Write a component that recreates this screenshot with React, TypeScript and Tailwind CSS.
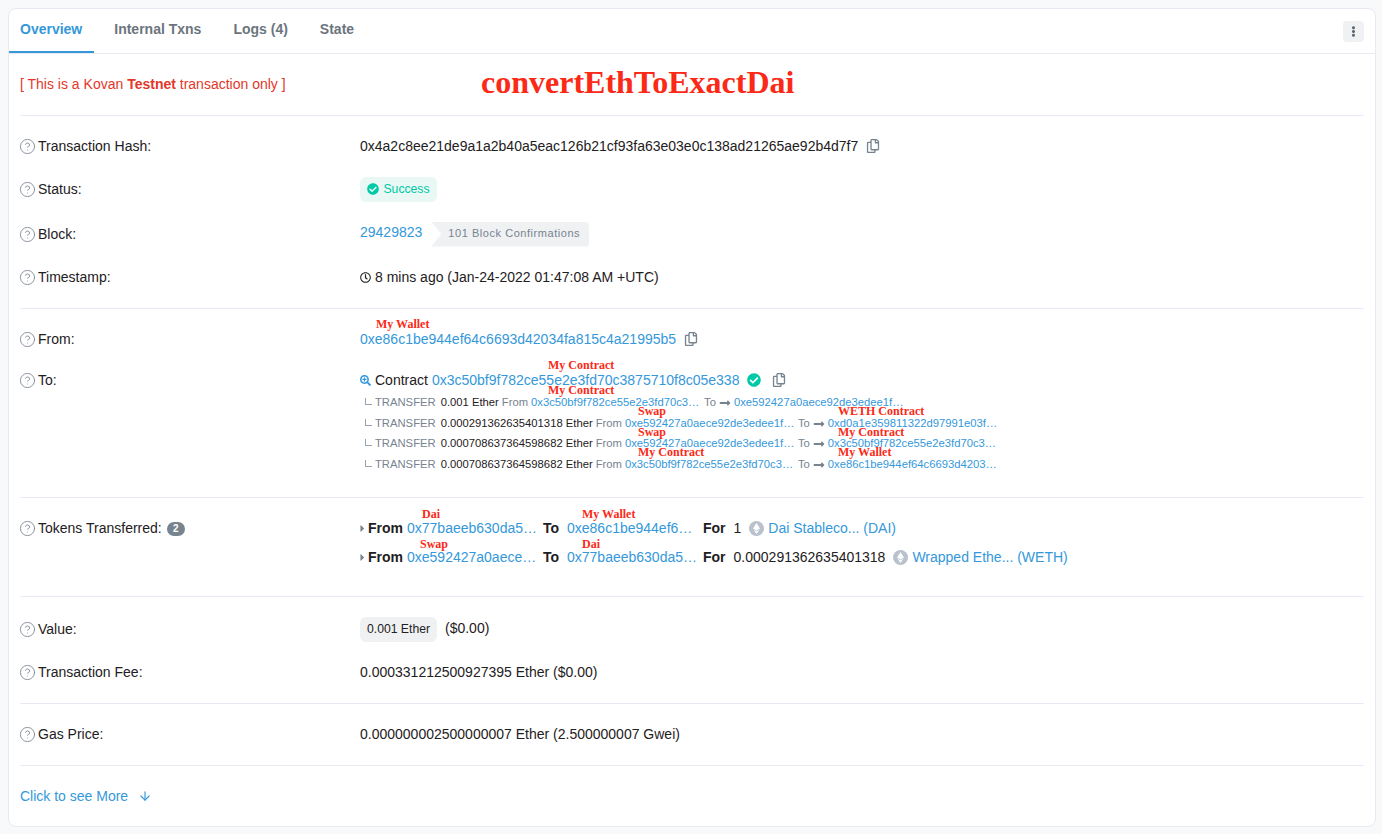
import type { ReactNode } from 'react';
import { CircleHelp, ArrowDown } from 'lucide-react';
import {
  FaRegCopy,
  FaCheckCircle,
  FaRegClock,
  FaSearchPlus,
  FaLongArrowAltRight,
  FaEllipsisV,
  FaCaretRight,
} from 'react-icons/fa';

function Note({ className, children }: { className: string; children: ReactNode }) {
  return (
    <span className={`absolute whitespace-nowrap font-['Liberation_Serif',serif] text-[12px] leading-none font-bold text-[#fb2a17] ${className}`}>
      {children}
    </span>
  );
}

function Row({ label, className, children }: { label?: ReactNode; className: string; children: ReactNode }) {
  return (
    <div className={`flex items-center ${className}`}>
      <div className="flex w-[340px] shrink-0 items-center gap-[2px] text-[#1e2022]">
        {label && <CircleHelp size={17} strokeWidth={1.2} className="-ml-[1px] text-[#77838f]" />}
        {label}
      </div>
      <div className="relative flex items-center">{children}</div>
    </div>
  );
}

function Divider() {
  return <div className="mx-[11px] h-px bg-[#e7eaf3]" />;
}

function Copy({ className = '' }: { className?: string }) {
  return <FaRegCopy size={14} className={`text-[#77838f] ${className}`} />;
}

function Transfer({
  amount,
  from,
  to,
  className,
  children,
}: {
  amount: string;
  from: string;
  to: string;
  className: string;
  children?: ReactNode;
}) {
  return (
    <div className={`relative flex items-center text-[11.25px] whitespace-nowrap ${className}`}>
      <span className="mr-[3px] ml-[5px] h-[7px] w-[7px] -translate-y-[1px] border-b border-l border-[#97a4af]" />
      <span className="mr-[5px] text-[#77838f]">TRANSFER</span>
      <span className="text-[#1e2022]">{amount}</span>
      <span className="mr-[3px] ml-[3px] text-[#77838f]">From</span>
      <a className="w-[168px] text-[#3498db]">{from}</a>
      <span className="ml-[5px] text-[#77838f]">To</span>
      <FaLongArrowAltRight size={12} className="mx-[3px] text-[#77838f]" />
      <a className="text-[#3498db]">{to}</a>
      {children}
    </div>
  );
}

function TokenIcon() {
  return (
    <span className="flex h-[15px] w-[15px] items-center justify-center rounded-full bg-[#b9c1cc]">
      <svg width="7" height="11" viewBox="0 0 7 11" fill="white">
        <path d="M3.5 0 7 5.4 3.5 7.4 0 5.4Z" />
        <path d="M3.5 8.3 6.6 6.4 3.5 11 .4 6.4Z" />
      </svg>
    </span>
  );
}

export default function App() {
  return (
    <div className="h-[834px] overflow-hidden bg-[#f8f9fa] px-2 pt-2 font-['Liberation_Sans',Arial,sans-serif] text-[14px]">
      <div className="h-[819px] w-[1368px] rounded-lg border border-[#e7eaf3] bg-white">
        <div className="flex h-[45px] items-center justify-between border-b border-[#e7eaf3]">
          <div className="flex h-full items-center font-bold text-[#6c757e]">
            <div className="flex h-full items-center border-b-2 border-[#3498db] pr-3 pb-[2px] pl-[11px] text-[#3498db]">Overview</div>
            <div className="ml-5 pb-[4px]">Internal Txns</div>
            <div className="ml-8 pb-[4px]">Logs (4)</div>
            <div className="ml-8 pb-[4px]">State</div>
          </div>
          <div className="mr-[11px] flex h-[21px] w-[21px] items-center justify-center rounded bg-[#eff1f3] text-[#596673]">
            <FaEllipsisV size={11} />
          </div>
        </div>

        <div className="relative flex h-[61px] items-center px-[11px] text-[#e3372b]">
          <span>
            [ This is a Kovan <b>Testnet</b> transaction only ]
          </span>
          <span className="absolute top-[12px] left-[472px] font-['Liberation_Serif',serif] text-[32px] leading-none font-bold whitespace-nowrap text-[#fb2a17]">
            convertEthToExactDai
          </span>
        </div>
        <Divider />

        <div className="px-[11px] pt-[8px]">
          <Row label="Transaction Hash:" className="h-[44px]">
            <span className="text-[#1e2022]">0x4a2c8ee21de9a1a2b40a5eac126b21cf93fa63e03e0c138ad21265ae92b4d7f7</span>
            <Copy className="ml-2" />
          </Row>
          <Row label="Status:" className="h-[42px]">
            <span className="flex h-[25px] w-[77px] items-center justify-center gap-1 rounded-md bg-[#e9f8f4] text-[12.2px] text-[#00c9a7]">
              <FaCheckCircle size={12} />
              Success
            </span>
          </Row>
          <Row label="Block:" className="h-[48px]">
            <a className="-translate-y-[2px] text-[#3498db]">29429823</a>
            <span className="ml-[9px] flex h-[25px] w-[158px] items-center rounded-r bg-[#eff1f3] pb-[2px] pl-[17px] text-[11px] tracking-[0.55px] text-[#77838f] [clip-path:polygon(0_0,100%_0,100%_100%,0_100%,10px_50%)]">
              101 Block Confirmations
            </span>
          </Row>
          <Row label="Timestamp:" className="h-[38px]">
            <FaRegClock size={11} className="mr-[4px] text-[#1e2022]" />
            <span className="text-[#1e2022]">8 mins ago (Jan-24-2022 01:47:08 AM +UTC)</span>
          </Row>
          <div className="h-[12px]" />
        </div>
        <Divider />

        <div className="px-[11px] pt-[10px]">
          <Row label="From:" className="h-[40px]">
            <Note className="-top-[11px] left-[16px]">My Wallet</Note>
            <a className="text-[#3498db]">0xe86c1be944ef64c6693d42034fa815c4a21995b5</a>
            <Copy className="ml-2" />
          </Row>
          <Row label="To:" className="h-[42px]">
            <Note className="-top-[11px] left-[188px]">My Contract</Note>
            <FaSearchPlus size={11} className="mr-[4px] text-[#3498db]" />
            <span className="mr-1 text-[#1e2022]">Contract</span>
            <a className="text-[#3498db]">0x3c50bf9f782ce55e2e3fd70c3875710f8c05e338</a>
            <FaCheckCircle size={14} className="ml-2 text-[#00c9a7]" />
            <Copy className="ml-[11px]" />
          </Row>
          <div className="ml-[340px] -mt-[9px]">
            <Transfer
              amount="0.001 Ether"
              from="0x3c50bf9f782ce55e2e3fd70c3…"
              to="0xe592427a0aece92de3edee1f…"
              className="h-[21px]"
            >
              <Note className="-top-[8px] left-[188px]">My Contract</Note>
            </Transfer>
            <Transfer
              amount="0.000291362635401318 Ether"
              from="0xe592427a0aece92de3edee1f…"
              to="0xd0a1e359811322d97991e03f…"
              className="h-[21px]"
            >
              <Note className="-top-[8px] left-[278px]">Swap</Note>
              <Note className="-top-[8px] left-[478px]">WETH Contract</Note>
            </Transfer>
            <Transfer
              amount="0.000708637364598682 Ether"
              from="0xe592427a0aece92de3edee1f…"
              to="0x3c50bf9f782ce55e2e3fd70c3…"
              className="h-[19px]"
            >
              <Note className="-top-[8px] left-[278px]">Swap</Note>
              <Note className="-top-[8px] left-[478px]">My Contract</Note>
            </Transfer>
            <Transfer
              amount="0.000708637364598682 Ether"
              from="0x3c50bf9f782ce55e2e3fd70c3…"
              to="0xe86c1be944ef64c6693d4203…"
              className="h-[23px]"
            >
              <Note className="-top-[7px] left-[278px]">My Contract</Note>
              <Note className="-top-[7px] left-[478px]">My Wallet</Note>
            </Transfer>
          </div>
          <div className="h-[21px]" />
        </div>
        <Divider />

        <div className="px-[11px] pt-[16px]">
          <Row
            label={
              <>
                Tokens Transferred:
                <span className="ml-[3px] flex h-[14px] w-[18px] items-center justify-center rounded-full bg-[#77838f] text-[10px] font-bold text-white">2</span>
              </>
            }
            className="h-[29px]"
          >
            <Note className="-top-[10px] left-[62px]">Dai</Note>
            <Note className="-top-[10px] left-[222px]">My Wallet</Note>
            <FaCaretRight size={11} className="-ml-[3px] text-[#77838f]" />
            <b className="mr-1 text-[#1e2022]">From</b>
            <a className="w-[136px] text-[#3498db]">0x77baeeb630da5…</a>
            <b className="w-[24px] text-[#1e2022]">To</b>
            <a className="w-[136px] text-[#3498db]">0xe86c1be944ef6…</a>
            <b className="mr-[8px] text-[#1e2022]">For</b>
            <span className="mr-[8px] text-[#1e2022]">1</span>
            <TokenIcon />
            <a className="ml-[4px] text-[#3498db]">Dai Stableco... (DAI)</a>
          </Row>
          <Row className="h-[29px]">
            <Note className="-top-[9px] left-[60px]">Swap</Note>
            <Note className="-top-[9px] left-[222px]">Dai</Note>
            <FaCaretRight size={11} className="-ml-[3px] text-[#77838f]" />
            <b className="mr-1 text-[#1e2022]">From</b>
            <a className="w-[136px] text-[#3498db]">0xe592427a0aece…</a>
            <b className="w-[24px] text-[#1e2022]">To</b>
            <a className="w-[136px] text-[#3498db]">0x77baeeb630da5…</a>
            <b className="mr-[8px] text-[#1e2022]">For</b>
            <span className="mr-[8px] text-[#1e2022]">0.000291362635401318</span>
            <TokenIcon />
            <a className="ml-[4px] text-[#3498db]">Wrapped Ethe... (WETH)</a>
          </Row>
        </div>
        <div className="h-[24px]" />
        <Divider />

        <div className="px-[11px] pt-[11px]">
          <Row label="Value:" className="h-[42px]">
            <span className="flex h-[25px] w-[77px] items-center justify-center rounded-md bg-[#eff1f3] text-[12.2px] text-[#1e2022]">0.001 Ether</span>
            <span className="ml-2 -translate-y-[1px] text-[#1e2022]">($0.00)</span>
          </Row>
          <Row label="Transaction Fee:" className="h-[44px]">
            <span className="text-[#1e2022]">0.000331212500927395 Ether ($0.00)</span>
          </Row>
        </div>
        <div className="h-[9px]" />
        <Divider />

        <div className="px-[11px] pt-[9px]">
          <Row label="Gas Price:" className="h-[43px]">
            <span className="text-[#1e2022]">0.000000002500000007 Ether (2.500000007 Gwei)</span>
          </Row>
        </div>
        <div className="h-[9px]" />
        <Divider />

        <div className="flex h-[60px] items-center px-[11px] text-[#3498db]">
          Click to see More
          <ArrowDown size={14} strokeWidth={2} className="ml-[10px]" />
        </div>
      </div>
    </div>
  );
}
